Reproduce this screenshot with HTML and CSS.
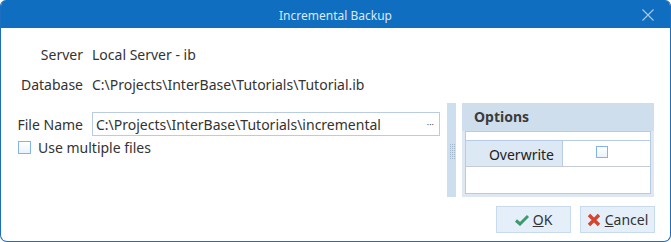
FILE: index.html
```html
<!DOCTYPE html>
<html lang="en">
<head>
  <meta charset="UTF-8">
  <title>Incremental Backup</title>
  <link rel="stylesheet" href="styles.css">
</head>
<body>
  <div class="window">
    <!-- Title bar -->
    <div class="titlebar">
      <span class="title">Incremental Backup</span>
      <svg class="close" width="12" height="12" viewBox="0 0 12 12">
        <path d="M0.5 0.5 L11.5 11.5 M11.5 0.5 L0.5 11.5" stroke="#a8c6e8" stroke-width="1.2" fill="none"/>
      </svg>
    </div>

    <div class="content">
      <!-- Connection info -->
      <div class="info">
        <div class="row"><span class="label">Server</span><span class="value">Local Server - ib</span></div>
        <div class="row"><span class="label">Database</span><span class="value">C:\Projects\InterBase\Tutorials\Tutorial.ib</span></div>
      </div>

      <div class="main">
        <div class="left">
          <div class="file-row">
            <span class="label">File Name</span>
            <div class="input">
              <span>C:\Projects\InterBase\Tutorials\incremental</span>
              <span class="ellipsis">···</span>
            </div>
          </div>
          <label class="check-row">
            <span class="box"></span>
            <span>Use multiple files</span>
          </label>
        </div>

        <div class="splitter"><div class="grip"></div></div>

        <!-- Options panel -->
        <div class="options">
          <div class="options-head">Options</div>
          <div class="grid">
            <div class="grid-top"></div>
            <div class="grid-row">
              <div class="cell-name">Overwrite</div>
              <div class="cell-value"><span class="box small"></span></div>
            </div>
          </div>
        </div>
      </div>

      <!-- Buttons -->
      <div class="buttons">
        <button class="btn">
          <svg width="14" height="12" viewBox="0 0 14 12"><path d="M1 6.5 L5 10 L13 2" stroke="#3d9a6c" stroke-width="3" fill="none"/></svg>
          <span><u>O</u>K</span>
        </button>
        <button class="btn">
          <svg width="14" height="14" viewBox="0 0 14 14"><path d="M2 2 L12 12 M12 2 L2 12" stroke="#d8432c" stroke-width="3.4" fill="none"/></svg>
          <span><u>C</u>ancel</span>
        </button>
      </div>
    </div>
  </div>
</body>
</html>
```

FILE: styles.css
```css
/* Dialog window */
body {
  margin: 0;
  padding: 0;
  background-color: #ffffff;
  font-family: "Segoe UI", "Noto Sans", "Open Sans", sans-serif;
  font-size: 14px;
  line-height: 19px;
  color: #333333;
}
.window {
  width: 671px;
  height: 242px;
  box-sizing: border-box;
  border: 1px solid #1a6fc0;
  border-top: none;
  border-radius: 6px 6px 7px 7px;
  overflow: hidden;
  display: flex;
  flex-direction: column;
}
.titlebar {
  height: 28px;
  background-color: #0f6ebf;
  margin: 0 -1px;
  display: flex;
  align-items: center;
  justify-content: center;
  position: relative;
}
.title {
  color: #dbe8f6;
  font-size: 12px;
  padding-top: 2px;
}
.close {
  position: absolute;
  right: 17px;
  top: 9px;
}
.content {
  flex: 1;
  display: flex;
  flex-direction: column;
}
.info {
  padding-top: 11px;
}
.row {
  display: flex;
  align-items: center;
  height: 30px;
}
.label {
  width: 82px;
  text-align: right;
  padding-right: 9px;
  flex-shrink: 0;
}
.main {
  display: flex;
  margin-top: 4px;
  height: 94px;
}
.left {
  width: 445px;
  padding-top: 9px;
}
.file-row {
  display: flex;
  align-items: center;
}
.input {
  width: 343px;
  height: 22px;
  border: 1px solid #b9cce2;
  display: flex;
  align-items: center;
  justify-content: space-between;
  padding-left: 3px;
  box-sizing: content-box;
}
.ellipsis {
  font-size: 9px;
  color: #555555;
  padding-right: 5px;
}
.check-row {
  display: flex;
  align-items: center;
  gap: 7px;
  margin-top: 2px;
  padding-left: 17px;
}
.box {
  display: inline-block;
  width: 11px;
  height: 11px;
  border: 1px solid #83b4e6;
  background: linear-gradient(#ffffff, #eaf3fc);
}
.splitter {
  width: 9px;
  margin-left: 1px;
  background-color: #cddeee;
  display: flex;
  align-items: center;
  justify-content: center;
}
.grip {
  width: 6px;
  height: 16px;
  background-image:
    linear-gradient(90deg, #cddeee 50%, transparent 50%),
    linear-gradient(#cddeee 50%, #98adc3 50%);
  background-size: 2px 2px, 2px 2px;
  background-position: 0 0, 1px 0;
  margin-top: 2px;
  opacity: 0.8;
}
.options {
  width: 192px;
  margin-left: 6px;
  background-color: #dfe8f2;
  display: flex;
  flex-direction: column;
  padding: 0 3px 3px 3px;
  box-sizing: border-box;
}
.options-head {
  height: 28px;
  background-color: #cfdeed;
  margin: 0 -3px;
  padding-left: 12px;
  padding-bottom: 2px;
  box-sizing: border-box;
  font-weight: bold;
  color: #3b3b3b;
  display: flex;
  align-items: center;
}
.grid {
  flex: 1;
  background-color: #ffffff;
  border: 1px solid #b6cce6;
}
.grid-top {
  height: 8px;
  border-bottom: 1px solid #b6cce6;
}
.grid-row {
  display: flex;
  height: 25px;
  border-bottom: 1px solid #c6ccd4;
}
.cell-name {
  width: 88px;
  background-color: #dce8f4;
  border-right: 1px solid #b6cce6;
  text-align: right;
  padding-right: 8px;
  line-height: 27px;
  color: #222222;
}
.cell-value {
  flex: 1;
  display: flex;
  justify-content: center;
  align-items: center;
  padding-right: 10px;
}
.box.small {
  width: 10px;
  height: 10px;
  margin-bottom: 3px;
}
.buttons {
  display: flex;
  justify-content: flex-end;
  gap: 9px;
  padding: 9px 15px 0 0;
}
.btn {
  height: 27px;
  width: 75px;
  background-color: #e4effa;
  border: 1px solid #c7daee;
  font-family: inherit;
  font-size: 14px;
  color: #333333;
  display: flex;
  align-items: center;
  justify-content: center;
  gap: 4px;
  padding: 0;
}
.btn u {
  text-decoration-thickness: 1px;
}
```
